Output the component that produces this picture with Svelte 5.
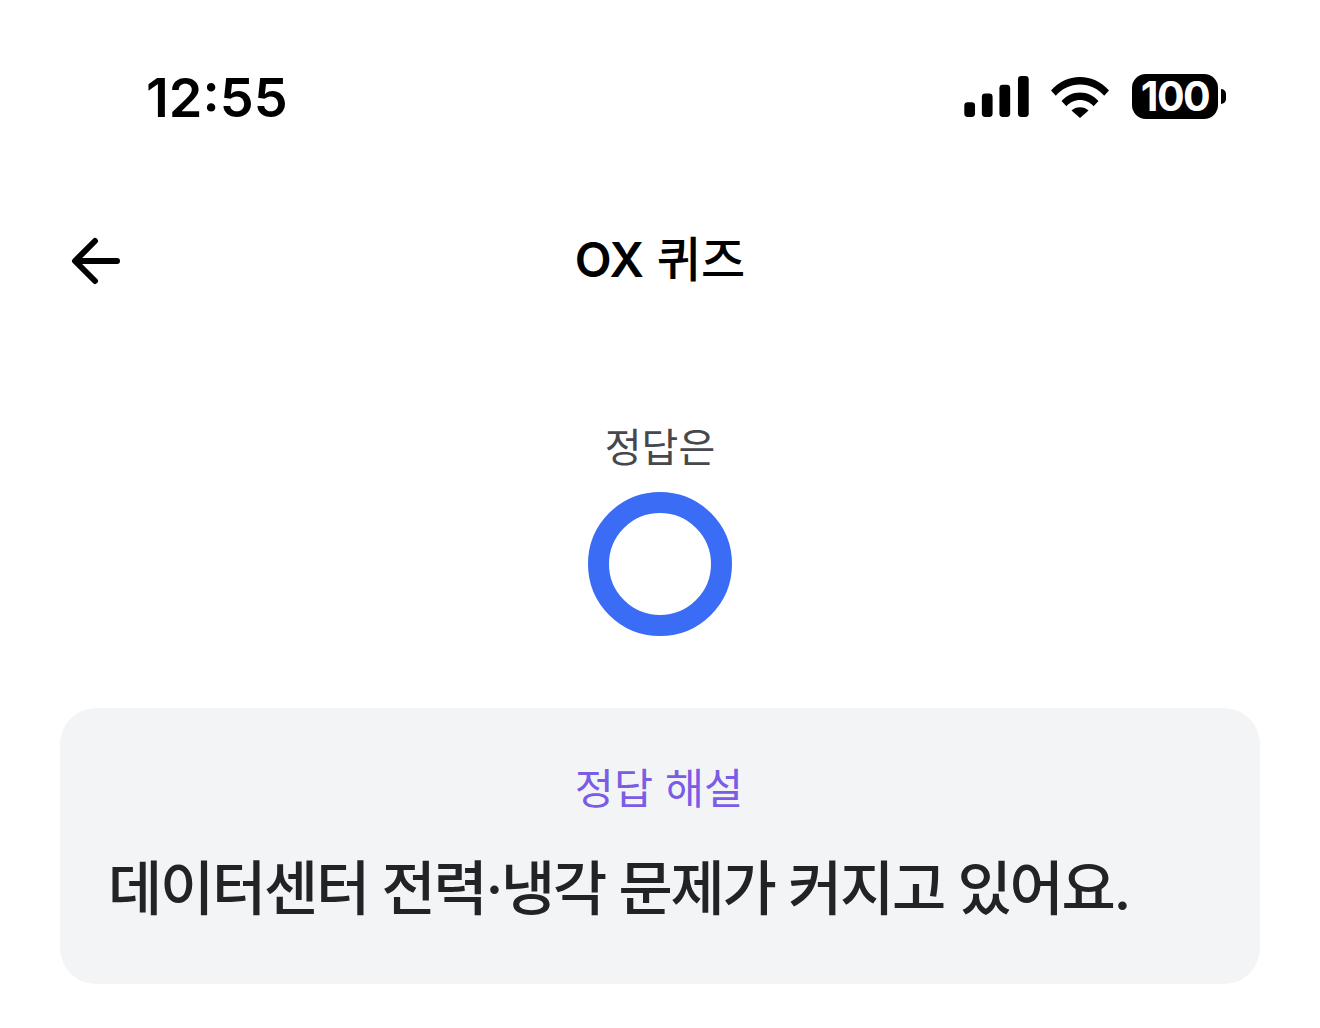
<script>
  const explanation = '데이터센터 전력·냉각 문제가 커지고 있어요.';
</script>

<div class="screen">
  <div class="status-bar">
    <span class="time">12:55</span>
    <div class="status-icons">
      <svg class="signal" width="65" height="41" viewBox="0 0 66 42" fill="#000">
        <rect x="0" y="27" width="11" height="15" rx="3.5" />
        <rect x="18" y="18" width="11" height="24" rx="3.5" />
        <rect x="36" y="9" width="11" height="33" rx="3.5" />
        <rect x="55" y="0" width="11" height="42" rx="3.5" />
      </svg>
      <svg class="wifi" width="58" height="42" viewBox="0 0 58 42" fill="#000">
        <path d="M0 14.5C7.500 6 17.800 1 29 1s21.500 5 29 13.500l-4.800 5.200C47 12.700 38.500 8.500 29 8.500S11 12.700 4.800 19.700z" />
        <path d="M10.500 25C15.200 19.600 21.800 16.400 29 16.400S42.800 19.600 47.500 25l-4.900 5.200C39.200 26.400 34.400 24 29 24s-10.200 2.400-13.600 6.200z" />
        <path d="M20.500 34.500C22.700 32.400 25.700 31.200 29 31.200s6.300 1.200 8.500 3.300L29 42z" />
      </svg>
      <div class="battery">
        <span class="battery-body">100</span>
        <span class="battery-cap"></span>
      </div>
    </div>
  </div>

  <header class="nav">
    <button class="back" aria-label="뒤로">
      <svg width="50" height="48" viewBox="0 0 50 48" fill="none" stroke="#000" stroke-width="6" stroke-linecap="round" stroke-linejoin="round">
        <path d="M46 24H5" />
        <path d="M24 4L4 24l20 20" />
      </svg>
    </button>
    <h1><span class="latin">OX</span> 퀴즈</h1>
  </header>

  <section class="answer">
    <p class="answer-label">정답은</p>
    <div class="ring"></div>
  </section>

  <section class="card">
    <h2>정답 해설</h2>
    <p>{explanation}</p>
  </section>
</div>

<style>
  :global(body) {
    margin: 0;
    background: #fff;
  }

  .screen {
    width: 1320px;
    height: 1028px;
    overflow: hidden;
    background: #fff;
    font-family: Inter, "Noto Sans CJK KR", sans-serif;
    display: flex;
    flex-direction: column;
  }

  .status-bar {
    height: 42px;
    margin-top: 76px;
    padding: 0 94px 0 146px;
    display: flex;
    align-items: center;
    justify-content: space-between;
  }

  .time {
    font-size: 54px;
    font-weight: 600;
    line-height: 46px;
    color: #000;
    position: relative;
    top: 1px;
  }

  .status-icons {
    display: flex;
    align-items: center;
  }

  .signal {
    margin-right: 22px;
    margin-bottom: 2px;
  }

  .wifi {
    margin-right: 23px;
  }

  .battery {
    display: flex;
    align-items: center;
    gap: 3px;
    position: relative;
    top: -1px;
  }

  .battery-body {
    width: 86px;
    height: 45px;
    border-radius: 14px;
    background: #000;
    color: #fff;
    font-size: 41px;
    font-weight: 700;
    line-height: 45px;
    text-align: center;
    letter-spacing: -1.5px;
  }

  .battery-cap {
    width: 5px;
    height: 15px;
    background: #000;
    border-radius: 0 8px 8px 0;
  }

  .nav {
    position: relative;
    height: 60px;
    margin-top: 112px;
    display: flex;
    align-items: center;
    justify-content: center;
  }

  .back {
    position: absolute;
    left: 71px;
    top: 7px;
    padding: 0;
    border: 0;
    background: none;
    display: flex;
  }

  h1 {
    margin: 0;
    font-size: 48px;
    font-weight: 500;
    color: #000;
    line-height: 60px;
  }

  .latin {
    font-weight: 600;
  }

  .answer {
    margin-top: 132px;
    display: flex;
    flex-direction: column;
    align-items: center;
  }

  .answer-label {
    margin: 0;
    font-size: 40px;
    line-height: 52px;
    font-weight: 400;
    color: #46484d;
  }

  .ring {
    width: 144px;
    height: 144px;
    margin-top: 18px;
    box-sizing: border-box;
    border: 21px solid #3b6cf6;
    border-radius: 50%;
  }

  .card {
    width: 1200px;
    height: 276px;
    margin: 72px auto 0;
    box-sizing: border-box;
    padding: 54px 48px 0;
    background: #f3f4f6;
    border-radius: 36px;
  }

  h2 {
    margin: 0 2px 0 0;
    font-size: 42.5px;
    font-weight: 400;
    line-height: 54px;
    text-align: center;
    color: #7b5ce6;
  }

  .card p {
    margin: 41px 0 0;
    font-size: 59px;
    font-weight: 500;
    line-height: 64px;
    color: #222326;
    white-space: nowrap;
    letter-spacing: -2.28px;
  }
</style>
